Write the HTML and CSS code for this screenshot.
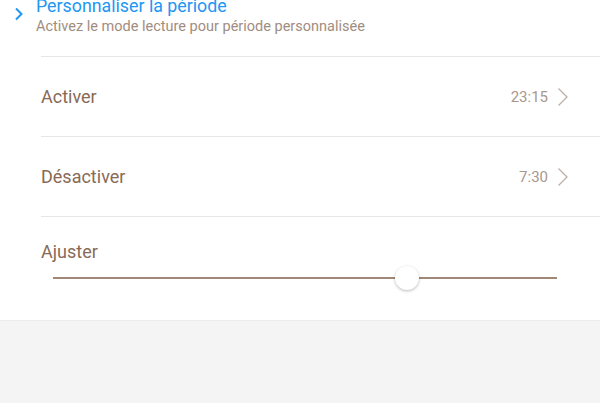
FILE: index.html
```html
<!DOCTYPE html>
<html lang="fr">
<head>
<meta charset="utf-8">
<link rel="stylesheet" href="styles.css">
</head>
<body>
<div class="panel">
  <div class="head">
    <svg class="head-chev" width="10" height="14" viewBox="0 0 10 14"><path d="M2 1.5 L7.5 7 L2 12.5" fill="none" stroke="#2196f3" stroke-width="2"/></svg>
    <div class="head-text">
      <div class="title">Personnaliser la période</div>
      <div class="sub">Activez le mode lecture pour période personnalisée</div>
    </div>
  </div>
  <div class="list">
    <div class="row">
      <span class="label">Activer</span>
      <span class="value">23:15</span>
      <svg class="chev" width="12" height="20" viewBox="0 0 12 20"><path d="M1.5 1.5 L10 10 L1.5 18.5" fill="none" stroke="#b9b0aa" stroke-width="1.3"/></svg>
    </div>
    <div class="row">
      <span class="label">Désactiver</span>
      <span class="value">7:30</span>
      <svg class="chev" width="12" height="20" viewBox="0 0 12 20"><path d="M1.5 1.5 L10 10 L1.5 18.5" fill="none" stroke="#b9b0aa" stroke-width="1.3"/></svg>
    </div>
    <div class="adjust">
      <div class="label">Ajuster</div>
      <div class="slider">
        <div class="track"></div>
        <div class="thumb" style="left: 70.2%"></div>
      </div>
    </div>
  </div>
</div>
<div class="rest"></div>
</body>
</html>
```

FILE: styles.css
```css
html, body {
  margin: 0;
  padding: 0;
  background: #f4f4f4;
  font-family: Roboto, "Noto Sans", sans-serif;
  overflow: hidden;
}
.panel {
  display: flow-root;
  background: #ffffff;
  height: 321px;
  border-bottom: 1px solid #ececec;
  box-sizing: border-box;
}
.head {
  display: flex;
  align-items: flex-start;
  height: 56px;
}
.head-chev {
  margin-left: 14px;
  margin-right: 12px;
  margin-top: 7px;
  flex: none;
}
.head-text {
  display: flex;
  flex-direction: column;
  margin-top: -4px;
}
.title {
  color: #2196f3;
  font-size: 17.8px;
  line-height: 20px;
}
.sub {
  color: #a18d80;
  font-size: 14.5px;
  line-height: 18px;
  margin-top: 2px;
}
.list {
  margin-left: 41px;
}
.row {
  display: flex;
  align-items: center;
  height: 80px;
  border-top: 1px solid #e6e6e6;
  box-sizing: border-box;
  padding-right: 31px;
}
.label {
  color: #886a56;
  font-size: 18px;
  flex: 1;
}
.value {
  color: #a8978b;
  font-size: 15px;
  margin-right: 9px;
}
.chev {
  display: block;
}
.adjust {
  border-top: 1px solid #e6e6e6;
  padding-top: 25px;
  padding-right: 43px;
}
.adjust .label {
  line-height: 20px;
}
.slider {
  position: relative;
  height: 24px;
  margin-top: 4px;
  margin-left: 12px;
}
.track {
  position: absolute;
  left: 0;
  right: 0;
  top: 11px;
  height: 2px;
  background: #a08776;
}
.thumb {
  position: absolute;
  top: 0;
  width: 24px;
  height: 24px;
  margin-left: -12px;
  border-radius: 50%;
  background: #ffffff;
  box-shadow: 0 1px 3px rgba(0,0,0,0.28);
}
```
